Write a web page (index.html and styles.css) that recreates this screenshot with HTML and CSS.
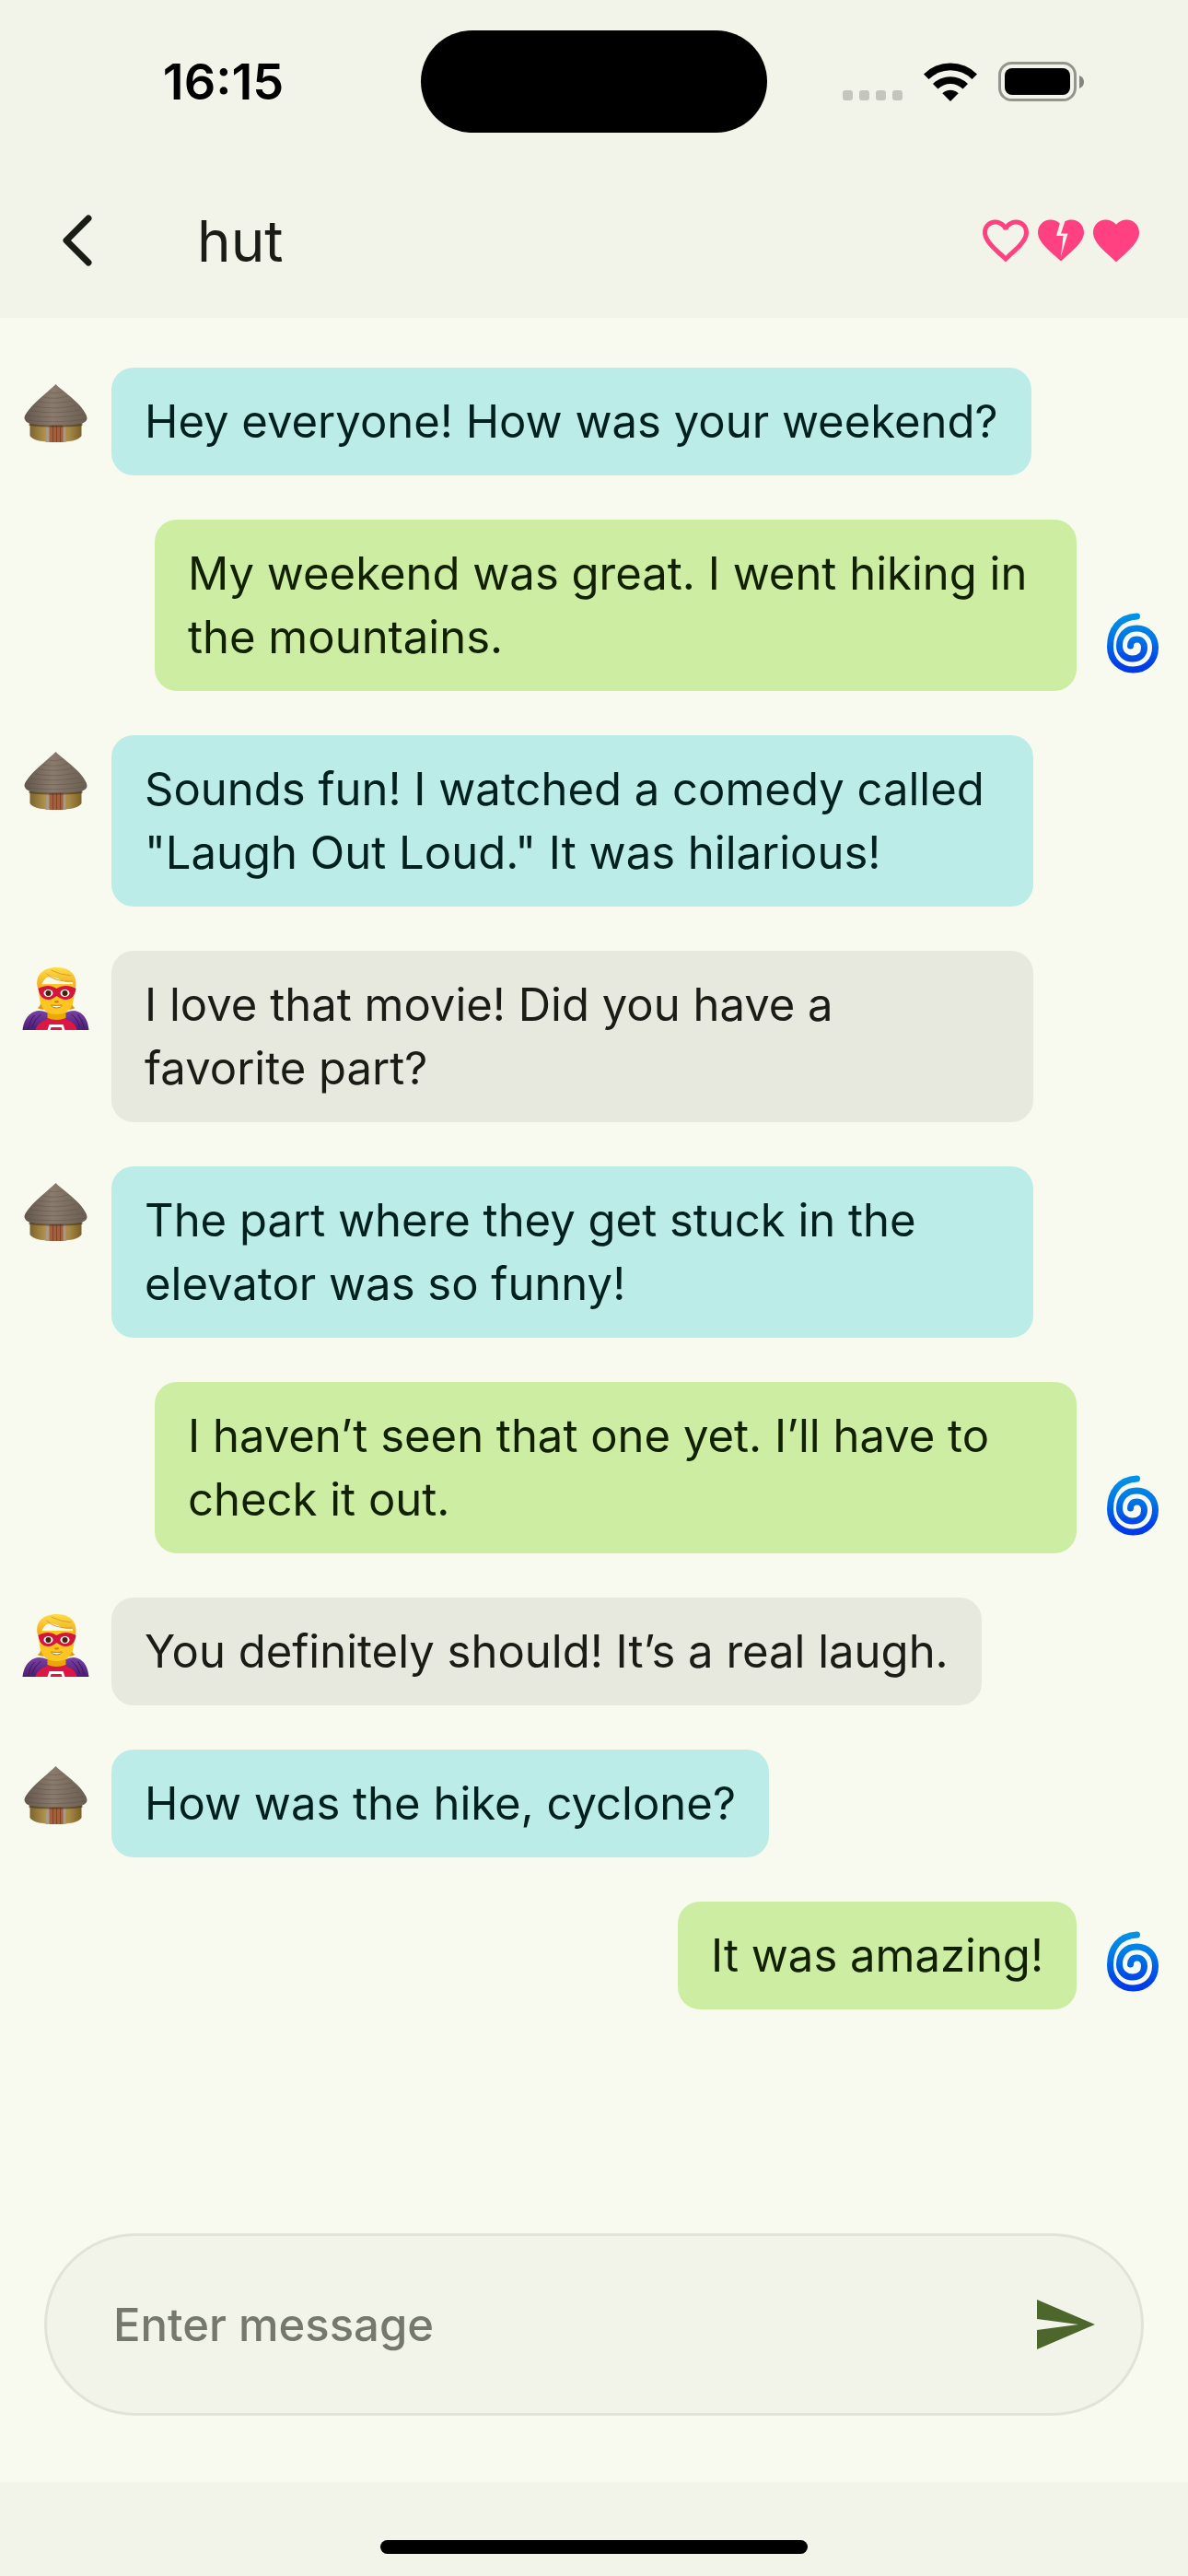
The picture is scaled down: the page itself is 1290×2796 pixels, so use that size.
FILE: index.html
```html
<!DOCTYPE html>
<html lang="en">
<head>
    <meta charset="UTF-8">
    <meta name="viewport" content="width=device-width, initial-scale=1.0">
    <title>hut</title>
    <link rel="stylesheet" href="styles.css">
</head>
<body>
    <!-- shared avatars -->
    <svg class="sprites" aria-hidden="true">
        <defs>
            <linearGradient id="roof" x1="0" y1="0" x2="1" y2="0">
                <stop offset="0" stop-color="#62564b"/>
                <stop offset="0.45" stop-color="#8a7b6d"/>
                <stop offset="1" stop-color="#6a5d51"/>
            </linearGradient>
            <linearGradient id="wall" x1="0" y1="0" x2="1" y2="0">
                <stop offset="0" stop-color="#7d642f"/>
                <stop offset="0.3" stop-color="#b0924c"/>
                <stop offset="0.75" stop-color="#a98b45"/>
                <stop offset="1" stop-color="#7a6029"/>
            </linearGradient>
            <linearGradient id="swirl" gradientUnits="userSpaceOnUse" x1="0" y1="4" x2="0" y2="68">
                <stop offset="0" stop-color="#0095e6"/>
                <stop offset="0.4" stop-color="#0078e6"/>
                <stop offset="0.85" stop-color="#0040e8"/>
                <stop offset="1" stop-color="#0038e8"/>
            </linearGradient>
            <linearGradient id="hair" x1="0" y1="0" x2="0" y2="1">
                <stop offset="0" stop-color="#ffdc45"/>
                <stop offset="1" stop-color="#eaa51b"/>
            </linearGradient>
            <linearGradient id="cape" x1="0" y1="0" x2="0" y2="1">
                <stop offset="0" stop-color="#7a40a6"/>
                <stop offset="1" stop-color="#4b1f70"/>
            </linearGradient>
        </defs>
        <symbol id="hut" viewBox="0 0 72 72">
            <path d="M8 42h56v16c-3 5-14 7-28 7S11 63 8 58z" fill="url(#wall)"/>
            <path d="M28 45h18v20H28z" fill="#a2603f"/>
            <path d="M33 46v19M37 46v19M41 46v19" stroke="#7c452c" stroke-width="1"/>
            <path d="M26 45h3v20h-4zM44 45h3v20h-3z" fill="#a89a86"/>
            <path d="M7 43h58v4c-15 2-43 2-58 0z" fill="#43341f" opacity=".6"/>
            <path d="M36 2C30 8 16 19 10 26 6 31 2 35 2 39c1 4 4 5 7 6 14 2 40 2 54 0 4-1 7-3 7-6 0-4-4-9-8-14C55 17 42 8 36 2z" fill="url(#roof)"/>
            <path d="M28 11q8 2 16-1M22 16q14 3 27-1M17 21q19 3 37-1M13 26q24 4 45-1M9 31q27 4 53-1M5 36q30 4 61-1M4 41q32 4 64-1" fill="none" stroke="#55493f" stroke-width="1" opacity=".35"/>
        </symbol>
        <symbol id="cyclone" viewBox="0 0 72 72">
            <path d="M41 7C22 8 12 21 12 40c0 16 12 25 25 25 14 0 24-10 24-24 0-13-9-21-20-21-12 0-19 8-19 19 0 9 7 14 14 14 8 0 13-5 13-12 0-6-4-9-8-9-5 0-7 3-7 7" fill="none" stroke="url(#swirl)" stroke-width="7" stroke-linecap="round"/>
        </symbol>
        <symbol id="hero" viewBox="0 0 72 72">
            <path d="M20 37q0 8-4 9 5 3 10 1h21q6 2 10-1-4-2-4-9z" fill="#d9981c"/>
            <path d="M0 70c1-9 5-17 13-20 4-2 9-1 14 1h20c5-2 9-3 13-1 8 3 11 11 12 20z" fill="url(#cape)"/>
            <path d="M14 70c1-6 6-9 13-12h20c7 3 11 6 12 12z" fill="#dd1745"/>
            <path d="M27 48v9q10 4 20 0v-9z" fill="#e8a806"/>
            <path d="M13 54q-5 5-7 15M20 53q-7 5-10 14M60 53q5 6 7 15M53 53q7 5 9 14" fill="none" stroke="#3b1760" stroke-width="1"/>
            <path d="M27 70l2-6h15l2 6h-3l-1-3H31l-1 3z" fill="#fff"/>
            <path d="M18 20c-1 20 2 33 19 33s20-13 19-33z" fill="#fdc51f"/>
            <path d="M17 26C12 11 22 2 37 2c17 0 24 11 20 25l-3-9q-8 1-16-4-7-3-12-1-5 4-7 13z" fill="url(#hair)"/>
            <path d="M26 9q9 9 28 8M31 5q10 5 22 6" fill="none" stroke="#dfa01b" stroke-width="1"/>
            <path d="M17 25c7-4 14-4 20 0 6-4 14-4 21 0-1 8-5 12-11 12-4 0-7-2-10-4-3 2-5 4-9 4-6 0-10-4-11-12z" fill="#d2163c"/>
            <ellipse cx="28" cy="30" rx="5" ry="4" fill="#fff"/>
            <ellipse cx="46" cy="30" rx="5" ry="4" fill="#fff"/>
            <circle cx="28" cy="30" r="3" fill="#42230c"/>
            <circle cx="46" cy="30" r="3" fill="#42230c"/>
            <path d="M35 39q2 1 4 0" stroke="#c98300" stroke-width="2" fill="none"/>
            <path d="M31 43q6 1 12 0-1 3-6 3t-6-3z" fill="#fff" stroke="#c07a10" stroke-width="1"/>
        </symbol>
    </svg>

    <div class="app">
        <div class="status-bar">
            <div class="time">16:15</div>
            <div class="island"></div>
            <div class="status-icons">
                <svg class="signal" viewBox="0 0 65 11" fill="#c4c5bd">
                    <rect width="11" height="11" rx="3"/>
                    <rect x="18" width="11" height="11" rx="3"/>
                    <rect x="36" width="11" height="11" rx="3"/>
                    <rect x="54" width="11" height="11" rx="3"/>
                </svg>
                <svg class="wifi" viewBox="0 0 58 42">
                    <path d="M0 12.500A41 41 0 0 1 58 12.500L52.500 18A33.500 33.500 0 0 0 5.500 18z"/>
                    <path d="M10 23A27 27 0 0 1 48 23L42.500 28.500A19.500 19.500 0 0 0 15.500 28.500z"/>
                    <path d="M20.300 33.300A12.500 12.500 0 0 1 37.700 33.300L29 42z"/>
                </svg>
                <svg class="battery" viewBox="0 0 94 43">
                    <rect x="1.500" y="1.500" width="82" height="40" rx="13" fill="none" stroke="#94958e" stroke-width="3"/>
                    <rect x="7" y="7" width="71" height="29" rx="8"/>
                    <path d="M88 15q5 2 5 7t-5 7z" fill="#84857e"/>
                </svg>
            </div>
        </div>

        <header class="top-bar">
            <button class="icon-btn back" type="button" aria-label="Back">
                <svg viewBox="0 0 34 58"><path d="M29 5L5 29l24 24" fill="none" stroke="#1a1c16" stroke-width="7" stroke-linecap="round" stroke-linejoin="round"/></svg>
            </button>
            <h1>hut</h1>
            <div class="hearts">
                <svg viewBox="0 0 24 24"><path d="M16.500 3c-1.740 0-3.410.81-4.500 2.090C10.910 3.810 9.240 3 7.500 3 4.420 3 2 5.420 2 8.500c0 3.780 3.400 6.860 8.550 11.540L12 21.350l1.450-1.320C18.600 15.360 22 12.280 22 8.500 22 5.420 19.580 3 16.500 3zm-4.400 15.550l-.1.100-.1-.1C7.140 14.240 4 11.390 4 8.500 4 6.500 5.500 5 7.500 5c1.540 0 3.040.99 3.570 2.360h1.870C13.460 5.990 14.960 5 16.500 5c2 0 3.500 1.500 3.500 3.500 0 2.890-3.140 5.740-7.900 10.050z"/></svg>
                <svg viewBox="0 0 24 24"><path d="M16.500 3c-.96 0-1.900.25-2.730.69L12 9h3l-3 10 1-9h-3l1.540-5.390C10.470 3.610 9.010 3 7.500 3 4.420 3 2 5.420 2 8.500c0 4.130 4.160 7.180 10 12.500 5.470-4.940 10-8.260 10-12.500C22 5.420 19.580 3 16.500 3z"/></svg>
                <svg viewBox="0 0 24 24"><path d="M12 21.350l-1.450-1.320C5.400 15.360 2 12.280 2 8.500 2 5.420 4.420 3 7.500 3c1.740 0 3.410.81 4.500 2.090C13.090 3.810 14.760 3 16.500 3 19.580 3 22 5.420 22 8.500c0 3.780-3.400 6.860-8.550 11.540L12 21.350z"/></svg>
            </div>
        </header>

        <main class="messages">
            <div class="message">
                <svg class="avatar"><use href="#hut"/></svg>
                <p class="bubble teal">Hey everyone! How was your weekend?</p>
            </div>
            <div class="message mine">
                <p class="bubble green">My weekend was great. I went hiking in the mountains.</p>
                <svg class="avatar"><use href="#cyclone"/></svg>
            </div>
            <div class="message">
                <svg class="avatar"><use href="#hut"/></svg>
                <p class="bubble teal">Sounds fun! I watched a comedy called "Laugh Out Loud." It was hilarious!</p>
            </div>
            <div class="message">
                <svg class="avatar"><use href="#hero"/></svg>
                <p class="bubble gray">I love that movie! Did you have a favorite part?</p>
            </div>
            <div class="message">
                <svg class="avatar"><use href="#hut"/></svg>
                <p class="bubble teal">The part where they get stuck in the elevator was so funny!</p>
            </div>
            <div class="message mine">
                <p class="bubble green">I haven’t seen that one yet. I’ll have to check it out.</p>
                <svg class="avatar"><use href="#cyclone"/></svg>
            </div>
            <div class="message">
                <svg class="avatar"><use href="#hero"/></svg>
                <p class="bubble gray">You definitely should! It’s a real laugh.</p>
            </div>
            <div class="message">
                <svg class="avatar"><use href="#hut"/></svg>
                <p class="bubble teal">How was the hike, cyclone?</p>
            </div>
            <div class="message mine">
                <p class="bubble green">It was amazing!</p>
                <svg class="avatar"><use href="#cyclone"/></svg>
            </div>
        </main>

        <form class="composer">
            <input type="text" placeholder="Enter message" aria-label="Enter message">
            <button class="icon-btn send" type="button" aria-label="Send">
                <svg viewBox="0 0 24 24"><path d="M2 21l21-9L2 3v7l15 2-15 2z"/></svg>
            </button>
        </form>

        <div class="home-bar"><div class="home-indicator"></div></div>
    </div>
</body>
</html>
```
FILE: styles.css
```css
* {
    box-sizing: border-box;
}
body {
    margin: 0;
    font-family: Inter, "Liberation Sans", sans-serif;
    background-color: #f9faef;
    color: #1a1c16;
}
.sprites {
    position: absolute;
    width: 0;
    height: 0;
}
.app {
    display: flex;
    flex-direction: column;
    min-height: 100vh;
}

/* status bar */
.status-bar {
    display: grid;
    grid-template-columns: 1fr auto 1fr;
    align-items: center;
    height: 177px;
    background-color: #f2f3e9;
}
.time {
    padding-left: 28px;
    text-align: center;
    font-size: 54px;
    font-weight: 600;
    color: #000;
}
.island {
    width: 376px;
    height: 111px;
    border-radius: 56px;
    background-color: #000;
}
.status-icons {
    display: flex;
    align-items: center;
    justify-content: flex-end;
    gap: 23px;
    padding-right: 112px;
}
.signal {
    width: 65px;
    height: 11px;
    margin-top: 30px;
}
.wifi {
    width: 58px;
    height: 42px;
}
.battery {
    width: 94px;
    height: 43px;
}

/* top bar */
.top-bar {
    display: flex;
    align-items: center;
    height: 168px;
    padding: 0 48px;
    background-color: #f2f3e9;
}
.icon-btn {
    display: flex;
    align-items: center;
    justify-content: center;
    padding: 0;
    border: none;
    background: none;
    cursor: pointer;
}
.back {
    width: 72px;
    height: 72px;
}
.back svg {
    width: 34px;
    height: 58px;
}
.top-bar h1 {
    flex: 1;
    margin: 0;
    padding-left: 94px;
    font-size: 62px;
    font-weight: 400;
}
.hearts {
    display: flex;
    fill: #ff4081;
}
.hearts svg {
    width: 60px;
    height: 60px;
}

/* messages */
.messages {
    flex: 1;
    display: flex;
    flex-direction: column;
    gap: 48px;
    padding: 54px 24px;
}
.message {
    display: flex;
    align-items: flex-start;
    gap: 24px;
    padding-right: 144px;
}
.message.mine {
    align-items: flex-end;
    justify-content: flex-end;
    padding-right: 0;
    padding-left: 144px;
}
.avatar {
    flex: none;
    width: 73px;
    height: 72px;
    margin: 16px 0;
}
.bubble {
    margin: 0;
    padding: 24px 36px;
    border-radius: 24px;
    font-size: 49px;
    line-height: 69px;
}
.teal {
    background-color: #bcece7;
    color: #00201e;
}
.green {
    background-color: #cdeda3;
    color: #102000;
}
.gray {
    background-color: #e8e9de;
}

/* message box */
.composer {
    display: flex;
    align-items: center;
    height: 198px;
    margin: 0 48px 72px;
    padding-right: 47px;
    border: 3px solid #e2e3d8;
    border-radius: 99px;
    background-color: #f3f4e9;
}
.composer input {
    flex: 1;
    min-width: 0;
    padding: 0 0 0 72px;
    border: none;
    outline: none;
    background: none;
    font-family: inherit;
    font-size: 49px;
    font-weight: 500;
    color: #1a1c16;
}
.composer input::placeholder {
    color: #75796c;
    opacity: 1;
}
.send svg {
    width: 72px;
    height: 72px;
    fill: #4c662b;
}

.home-bar {
    display: flex;
    align-items: flex-end;
    justify-content: center;
    height: 102px;
    padding-bottom: 24px;
    background-color: #f3f4e9;
}
.home-indicator {
    width: 36%;
    height: 15px;
    border-radius: 8px;
    background-color: #000;
}
```
